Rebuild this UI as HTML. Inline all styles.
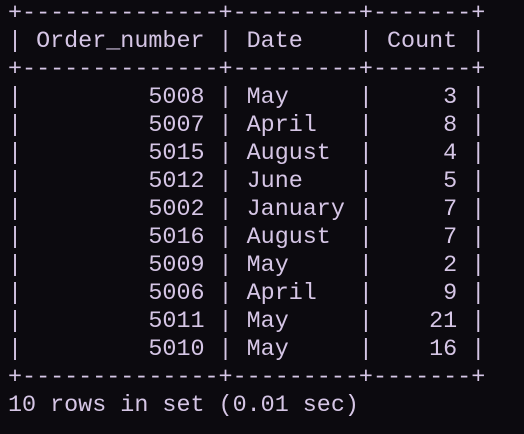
<!DOCTYPE html>
<html><head><meta charset="utf-8"><style>
html,body{margin:0;padding:0;background:#0c0a0f;width:524px;height:434px;overflow:hidden}
pre{margin:0;position:absolute;left:8px;top:0px;font-family:"Liberation Mono","DejaVu Sans Mono",monospace;font-size:23.4px;line-height:28px;color:#d6c6e6;white-space:pre}
</style></head><body><pre>+--------------+---------+-------+
| Order_number | Date    | Count |
+--------------+---------+-------+
|         5008 | May     |     3 |
|         5007 | April   |     8 |
|         5015 | August  |     4 |
|         5012 | June    |     5 |
|         5002 | January |     7 |
|         5016 | August  |     7 |
|         5009 | May     |     2 |
|         5006 | April   |     9 |
|         5011 | May     |    21 |
|         5010 | May     |    16 |
+--------------+---------+-------+
10 rows in set (0.01 sec)</pre></body></html>
